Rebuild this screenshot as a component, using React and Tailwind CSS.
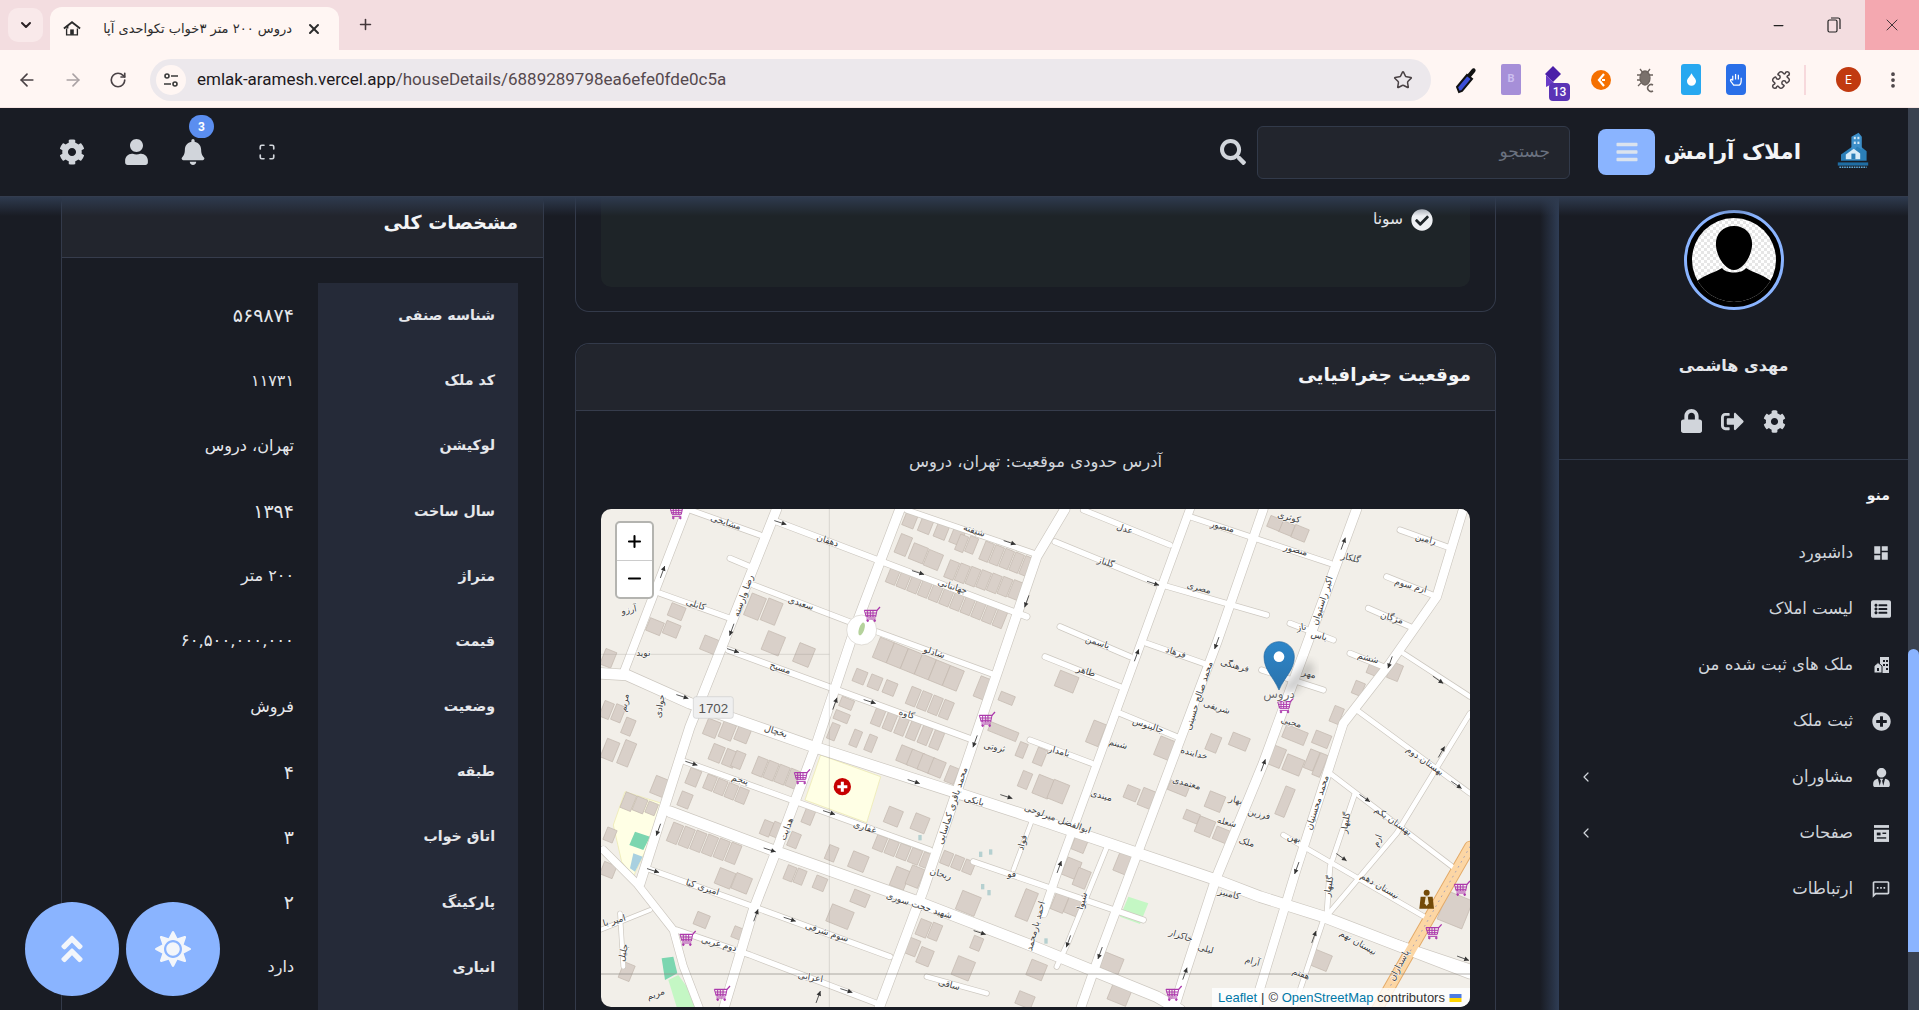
import React from "react";
import { ArrowLeft, ArrowRight, RotateCw, Star, Plus, X, Minus, ChevronDown, ChevronLeft, MoreVertical, Puzzle, Maximize } from "lucide-react";
import { FaCog, FaUser, FaBell, FaSearch, FaBars, FaLock, FaSignOutAlt, FaListAlt, FaPlusCircle, FaUserTie, FaSun, FaAngleDoubleUp, FaCheckCircle } from "react-icons/fa";
import { MdDashboard, MdOutlineSms } from "react-icons/md";

const rows = [
  ["شناسه صنفی", "۵۶۹۸۷۴", "text-[19px]"], ["کد ملک", "۱۱۷۳۱", "text-[16px]"], ["لوکیشن", "تهران، دروس", "text-[16px]"], ["سال ساخت", "۱۳۹۴", "text-[19px]"],
  ["متراژ", "۲۰۰ متر", "text-[16px]"], ["قیمت", "۶۰,۵۰۰,۰۰۰,۰۰۰", "text-[16.5px]"], ["وضعیت", "فروش", "text-[16px]"], ["طبقه", "۴", "text-[19px]"],
  ["اتاق خواب", "۳", "text-[19px]"], ["پارکینگ", "۲", "text-[19px]"], ["انباری", "دارد", "text-[16px]"],
];

const roads = [
  [[[290,27],[100,520]],24],[[[560,27],[300,680],[150,1150]],28],
  [[[930,27],[800,370],[680,730],[560,1050],[490,1230],[400,1530]],28],
  [[[1425,27],[1340,170],[1180,640],[1000,1170],[865,1530]],28],
  [[[1800,27],[1640,465],[1408,1100],[1360,1240]],24],[[[1555,1030],[1435,1325],[1400,1400]],14],
  [[[2020,27],[1880,430],[1650,1040],[1530,1360],[1470,1530]],26],
  [[[2300,27],[2020,790],[1880,1130],[1785,1420],[1750,1530]],28],
  [[[2620,27],[2540,290],[2400,490],[2260,670],[2120,1105],[1990,1530]],26],
  [[[2640,640],[2420,1000],[2200,1260],[2110,1530]],14],[[[2295,880],[2220,1100],[2210,1250]],14],
  [[[300,30],[510,105]],16],[[[560,65],[1310,350]],18],[[[950,30],[1345,165]],16],[[[490,255],[790,370]],16],
  [[[420,175],[480,200]],16],[[[860,395],[1215,525]],16],[[[210,280],[420,355]],16],[[[415,450],[1150,720]],18],
  [[[30,520],[110,525],[300,610],[670,740],[1090,875],[1320,950],[1880,1140],[2010,1190],[2200,1250],[2640,1420]],32],
  [[[285,785],[1020,1050]],16],[[[1150,1085],[1660,1260]],16],[[[240,935],[560,1055],[970,1200],[1320,1335],[1700,1490],[1770,1530]],32],
  [[[170,1105],[490,1220],[900,1370]],16],[[[260,1290],[480,1365],[860,1510]],16],
  [[[40,1050],[140,1150],[250,1290],[280,1400],[330,1530]],22],[[[1800,50],[2220,190]],16],
  [[[1480,30],[1740,135]],16],[[[1395,125],[1700,250],[2030,345]],16],[[[1410,380],[1620,470]],16],
  [[[1670,430],[1840,490]],16],[[[1365,470],[1590,560]],16],[[[1590,640],[1760,710]],16],[[[1320,720],[1505,790]],16],
  [[[2430,90],[2570,140]],16],[[[2390,230],[2540,290]],16],[[[2335,325],[2460,380]],16],[[[2280,460],[2380,500]],16],
  [[[2440,460],[2640,590]],14],[[[2300,630],[2640,880]],14],[[[2220,820],[2600,1110]],14],[[[2080,1005],[2520,1260]],14],
  [[[2010,1190],[2640,1400]],14],
  [[[1330,950],[1270,1110]],12],[[[90,1240],[100,1400]],12],[[[30,1290],[180,1230]],12],[[[2100,370],[2230,420]],16],
  [[[2015,510],[2200,570]],16],[[[1010,1430],[1190,1480]],14],
];

const cl = (x,y,n,dx,dy,w,h) => Array.from({length:n},(_,i)=>[x+i*dx,y+i*dy,w,h]);
const buildings = [
  ...cl(960,60,4,47,17,36,44),...cl(985,160,2,45,20,46,50),[940,135,36,60],...cl(1115,130,2,30,5,26,50),
  ...cl(1190,155,5,30,11,28,58),...cl(1085,210,7,32,10,30,55),...cl(910,225,11,32,13,30,55),...cl(495,320,2,50,15,46,70),
  [260,335,45,40],...cl(195,380,2,50,8,45,40),[360,435,50,45],[550,430,55,60],[642,465,50,60],[55,475,35,50],
  ...cl(880,450,6,42,17,45,65),...cl(810,530,3,45,17,36,40),[1180,565,40,65],[1250,595,45,28],...cl(970,590,4,33,13,30,55),
  [770,610,40,30],[755,650,45,28],[730,695,25,50],...cl(865,650,6,35,14,30,55),[797,715,25,50],[842,730,25,50],
  ...cl(945,765,4,32,13,40,50),[1085,825,30,50],[1305,840,30,50],[1295,750,25,45],[1240,695,90,28],...cl(365,685,3,47,8,40,50),
  [380,760,36,50],[420,775,36,50],[445,780,30,50],...cl(510,800,4,33,12,32,55),[310,832,35,50],...cl(360,848,4,32,13,30,45),
  [285,900,35,45],[210,860,45,55],[910,950,45,50],[990,970,45,50],[530,985,30,45],[560,990,30,45],[612,1020,30,45],[655,950,30,45],
  ...cl(255,1000,6,35,12,32,60),[725,1060,30,45],[805,1085,50,50],...cl(870,1030,5,35,13,32,45),...cl(1070,1075,3,33,13,30,40),
  [930,1135,45,60],[975,1130,40,60],[1135,1210,60,60],...cl(600,1120,2,30,10,28,45),[690,1150,35,40],[810,1195,50,40],[1310,1215,40,90],
  [405,1135,50,50],[455,1150,50,50],[335,1260,40,40],[445,1300,35,35],[750,1250,70,55],[1000,1285,34,50],[1035,1295,30,50],
  [965,1340,40,50],[1005,1370,40,50],[1120,1405,55,60],[1160,1330,30,40],[110,1415,35,50],[60,1005,30,40],
  [50,630,30,50],[85,640,30,50],[115,680,30,50],[60,750,40,60],[110,760,35,75],[55,1110,40,40],[1305,1500,50,40],
  [115,905,34,50],[150,915,34,44],[185,925,30,36],
  ...[[110,545,60,50],[198,700,40,70],[30,770,30,50],[40,860,50,60],[85,875,50,60],[305,880,40,40],[350,895,40,55],[445,865,60,30],[405,745,50,60],[550,730,35,50],[628,725,55,40],[1095,515,35,50],[1030,510,35,30],[985,565,30,40],[920,645,30,50],[795,705,70,40],[875,718,50,40],[740,770,40,60],[790,795,55,50],[845,780,30,60],[870,795,25,70],[765,905,30,90],[555,905,50,50],[485,950,45,30],[525,980,50,50],[575,1005,45,40],[150,1030,40,50],[125,1105,45,55],[155,1135,40,55],[280,1085,40,70],[90,1205,40,60],[130,1215,40,60],[245,1390,60,50],[870,1380,60,50],[20,1410,50,50],[270,1480,60,60],[1275,1230,80,90],[810,100,44,40],[770,85,40,35],[735,70,40,35]].map(([x,y,w,h])=>[x+1320,y,w,h]),
];

const labels = [
  ["مشایخی",405,75,18],["دهقان",710,130,18],["شیفته",1150,100,18],["جهانبانی",1085,268,18],["سعیدی",630,318,18],["کابلی",315,322,18],["آرزو",118,338,-10],["نوید",160,467,0],["مسیح",568,512,18],["شادلو",1030,465,18],["کاوه",948,650,18],["ثروتی",1212,750,10],["بخچال",555,702,18],["پنجم",448,847,15],["هدایت",598,990,-70],["غفاری",822,990,18],["بانکی",1150,910,15],["ریحان",1050,1130,15],["فو",1265,1130,0],["فواد",1305,1030,-75],["امیری کیا",335,1170,18],["شهید حجت سوری",985,1225,18],["سوم شرقی",708,1305,18],["دوم غربی",385,1340,15],["اعرابی",660,1440,10],["ساقی",1075,1462,15],["رضا وارسته",468,290,-70],["محمد باقری کماسایی",1095,920,-72],["جوادی",218,620,-80],["مریم",112,610,-80],["امیر با",75,1270,-15],["جلیل",108,1360,-75],["مریم",200,1490,-20],
  ...[["عدل",282,95,18],["منصور",575,88,15],["کوثری",775,60,15],["منصور",795,158,15],["گلکار",960,182,15],["رامین",1185,125,15],["گلناز",225,195,18],["مصری",505,272,15],["ارم سوم",1140,265,15],["اکبر راستیوان",885,305,-72],["یاس",865,415,15],["ناز",815,390,-5],["مژگان",1083,362,15],["یاسمن",200,435,18],["فرهاد",435,465,18],["فرهنگی",612,505,15],["محمد صالح حسینی",515,590,-72],["مهر",835,530,15],["ششم",1012,482,15],["طاهر",165,522,18],["شریفی",558,630,18],["جالینوس",352,685,18],["محبی",782,675,15],["شبنم",262,740,15],["نامدار",85,762,15],["خداینده",490,768,15],["معتمدی",468,858,15],["میندی",212,895,15],["بهار",615,908,15],["فرزین",685,950,15],["بهستان دوم",1180,790,35],["شعله",588,975,15],["ابوالفضل میرلوحی",80,965,20],["ملک",648,1035,15],["بهن",790,1022,15],["محمد محسنیان",870,910,-72],["کامبیز",595,1190,15],["نیستان دهم",1045,1165,30],["بهستان یکم",1085,970,35],["گلبهار",955,970,-80],["گلبهار",905,1160,-80],["ارم",1050,1025,-70],["نیستان نهم",980,1335,30],["خاکزار",450,1315,18],["لیلی",525,1355,15],["آرام",665,1392,15],["پاسداران",1115,1400,-62],["هفتم",810,1430,20],["شیوا",165,1205,-75],["احمد بارمحمد",25,1280,-75]].map(([t,x,y,r])=>[t,x+1320,y,r]),
];

const arrows = [[218,215,-70],[572,68,18],[425,390,110],[985,218,18],[1310,305,110],[430,452,18],[735,610,-70],[840,605,18],[278,590,18],[1155,725,110],[305,790,18],[972,845,18],[1250,890,18],[718,938,18],[205,990,110],[540,1050,18],[190,1112,18],[498,1245,-70],[600,1258,18],[1170,1298,18],[770,1472,18],[685,1490,-70],[1260,128,18],
  ...[[940,130,-70],[370,250,18],[320,465,-70],[560,430,110],[1080,488,110],[1225,540,35],[1235,755,-60],[1280,855,35],[700,795,-70],[1005,895,35],[88,1100,-70],[800,1105,110],[935,1072,35],[852,1310,-70],[115,1325,110],[210,1360,110],[465,1420,-70],[1300,1375,20]].map(([x,y,a])=>[x+1320,y,a]),
];

const carts = [[262,35],[845,343],[1190,658],[635,830],[292,1315],[395,1480],[2085,617],[2615,1165],[2530,1295],[1750,1480]];

function Cart({x,y}){
  return <g transform={`translate(${x} ${y})`} fill="none" stroke="#ac39ac" strokeWidth="3">
    <path d="M-22 -12H16L25 -22" strokeWidth="4"/><path d="M-22 -12L-16 8H12L16 -12"/><path d="M-12 -12V8M-4 -12V8M4 -12V8M-20 -4H14M-18 3H13"/><path d="M-16 14H12" strokeWidth="3"/>
    <circle cx="-12" cy="19" r="2.5" fill="#ac39ac"/><circle cx="9" cy="19" r="2.5" fill="#ac39ac"/>
  </g>;
}

function MapDrawing(){
  return (
    <svg viewBox="33 27 2607 1494" className="block w-full h-full" preserveAspectRatio="none">
      <defs>
        <linearGradient id="pin" x1="0" y1="0" x2="0" y2="1"><stop offset="0" stopColor="#2e86c8"/><stop offset="1" stopColor="#2a73ad"/></linearGradient>
        <filter id="blur"><feGaussianBlur stdDeviation="12"/></filter>
      </defs>
      <rect x="33" y="27" width="2607" height="1494" fill="#f2efe9"/>
      <polygon points="70,975 105,875 215,910 190,1000 130,1130 95,1085" fill="#ffffe5" stroke="#ece9a8" strokeWidth="2"/>
      <polygon points="135,995 180,1010 160,1050 118,1035" fill="#7bd6b0"/>
      <polygon points="130,1060 158,1070 135,1115 120,1105" fill="#a8d0e0"/>
      <polygon points="235,1440 265,1425 335,1521 260,1521" fill="#c4f7c4"/>
      <polygon points="215,1375 250,1370 262,1420 225,1440" fill="#7bd6b0"/>
      <polygon points="1615,1190 1675,1210 1650,1272 1590,1250" fill="#c4f7c4"/>
      <polygon points="692,765 872,830 830,968 645,900" fill="#ffffe5" stroke="#ece9a8" strokeWidth="2"/>
      {buildings.map(([x,y,w,h],i)=>(
        <rect key={i} x={x-w/2} y={y-h/2} width={w} height={h} transform={`rotate(22 ${x} ${y})`} fill="#d9d0c9" stroke="#c4b9b0" strokeWidth="2"/>
      ))}
      <g fill="none" strokeLinecap="round" strokeLinejoin="round">
        {roads.map(([p,w],i)=><polyline key={i} points={p.map(q=>q.join(",")).join(" ")} stroke="#cdc8c0" strokeWidth={w+4}/>)}
        <polyline points="2640,1040 2360,1530" stroke="#e3ab6a" strokeWidth="36"/>
        {roads.map(([p,w],i)=><polyline key={i} points={p.map(q=>q.join(",")).join(" ")} stroke="#ffffff" strokeWidth={w}/>)}
        <polyline points="2640,1040 2360,1530" stroke="#fcd6a4" strokeWidth="30"/>
        <polyline points="2640,1040 2360,1530" stroke="#a9a3b4" strokeWidth="3" strokeDasharray="3 14"/>
      </g>
      <circle cx="815" cy="390" r="45" fill="#fff" stroke="#d5d0c8" strokeWidth="2"/>
      <ellipse cx="815" cy="387" rx="8" ry="20" transform="rotate(18 815 387)" fill="#b5d29c"/>
      {[[990,1013],[1172,1063],[1202,1056],[1178,1160],[1197,1178],[1368,1323]].map(([x,y],i)=><rect key={i} x={x-5} y={y-8} width="10" height="16" fill="#b5d0d0"/>)}
      <path d="M33 463H718M718 27V1521" stroke="#88857f" strokeWidth="1.2" opacity=".6" fill="none"/>
      <path d="M33 1422H2640" stroke="#88857f" strokeWidth="2" fill="none"/>
      {arrows.map(([x,y,a],i)=>(
        <g key={i} transform={`translate(${x} ${y}) rotate(${a})`}><path d="M-20 0H18" stroke="#4a4a4a" strokeWidth="2.5"/><path d="M18 0L4 -7V7Z" fill="#333"/></g>
      ))}
      <g fontFamily="DejaVu Sans" fontSize="27" fill="#3d3d3d" textAnchor="middle" stroke="#ffffff" strokeWidth="3" paintOrder="stroke">
        {labels.map(([t,x,y,r],i)=><text key={i} x={x} y={y} transform={`rotate(${r} ${x} ${y})`} direction="rtl">{t}</text>)}
      </g>
      <rect x="310" y="590" width="120" height="65" rx="8" fill="#efefef" stroke="#cfcfcf" strokeWidth="2"/>
      <text x="370" y="640" textAnchor="middle" fontFamily="Liberation Sans" fontSize="40" fill="#555">1702</text>
      <circle cx="757" cy="860" r="26" fill="#c60000"/><path d="M757 845V875M742 860H772" stroke="#fff" strokeWidth="9"/>
      {carts.map(([x,y],i)=><Cart key={i} x={x} y={y}/>)}
      <g transform="translate(2510 1210)" fill="#734a08"><circle cx="0" cy="-32" r="9"/><path d="M-18 -20H18L22 16H-22Z"/><path d="M-3 -20H3L6 0L0 8L-6 0Z" fill="#f0e4c8"/></g>
      <path d="M2070 568L2155 480L2175 510L2110 580Z" fill="#555" opacity=".3" filter="url(#blur)"/>
      <text x="2067" y="594" textAnchor="middle" fontFamily="DejaVu Sans" fontSize="36" fill="#6e6e6e" stroke="#fff" strokeWidth="3" paintOrder="stroke" direction="rtl">دروس</text>
      <path d="M2067 570C2050 530 2022 510 2022 470C2022 445 2042 425 2067 425C2092 425 2113 445 2113 470C2113 510 2084 530 2067 570Z" fill="url(#pin)" stroke="#2468a0" strokeWidth="2"/>
      <circle cx="2067" cy="470" r="16" fill="#fff"/>
    </svg>
  );
}

function HouseLogo({ className }){
  return (
    <svg viewBox="0 0 38 50" className={className}>
      <path d="M4 28L24 14L36 24V36H4Z" fill="#2b7fb8"/><path d="M17 30V6L26 1L30 6V22L24 18Z" fill="#3d8fc9"/>
      <rect x="20" y="6" width="2.5" height="3" fill="#cfe6f5"/><rect x="24.5" y="6" width="2.5" height="3" fill="#cfe6f5"/><rect x="20" y="12" width="2.5" height="3" fill="#cfe6f5"/><rect x="24.5" y="12" width="2.5" height="3" fill="#cfe6f5"/>
      <path d="M10 28L20 21L28 27V34H10Z" fill="#d8ecf8"/><rect x="17" y="27" width="5" height="7" fill="#2b7fb8"/>
      <path d="M0 38H38V42H0Z" fill="#1f6da3"/><path d="M2 44H36" stroke="#5fa8d6" strokeWidth="2" strokeDasharray="2 1"/>
    </svg>
  );
}

function Avatar(){
  return (
    <div className="w-[100px] h-[100px] rounded-full border-[3px] border-[#8ab4ff] bg-black p-[5px]">
      <svg viewBox="0 0 84 84" className="block w-full h-full rounded-full">
        <defs><pattern id="chk" width="6" height="6" patternUnits="userSpaceOnUse"><rect width="6" height="6" fill="#fff"/><rect width="3" height="3" fill="#e6e6e6"/><rect x="3" y="3" width="3" height="3" fill="#e6e6e6"/></pattern></defs>
        <rect width="84" height="84" fill="url(#chk)"/>
        <path d="M5 63C14 56 22 55 30 50C34 56 50 56 54 50C62 55 70 56 79 63V84H5Z" fill="#000"/>
        <path d="M42 8C54 8 61 17 60 28C59 40 50 52 42 52C34 52 25 40 24 28C23 17 30 8 42 8Z" fill="#000"/>
      </svg>
    </div>
  );
}

function PagesIcon(){
  return <svg viewBox="0 0 16 18" className="w-[15px] h-[17px]"><path d="M0 0H16V3H0Z" fill="#d1d5db"/><path d="M0 5H16V18H0Z" fill="#d1d5db"/><rect x="3" y="8" width="4" height="3" fill="#191c24"/><rect x="9" y="8" width="4" height="1.5" fill="#191c24"/><rect x="3" y="13" width="10" height="1.5" fill="#191c24"/></svg>;
}

function MyHouseIcon(){
  return <svg viewBox="0 0 15 16" className="w-[15px] h-[16px]" fill="#d1d5db"><path d="M6 0H15V16H6Z"/><path d="M0 9L4 5.5L8 9V16H0Z" stroke="#191c24" strokeWidth="1"/><rect x="9" y="3" width="2" height="2" fill="#191c24"/><rect x="12" y="3" width="2" height="2" fill="#191c24"/><rect x="9" y="7" width="2" height="2" fill="#191c24"/><rect x="12" y="7" width="2" height="2" fill="#191c24"/><rect x="12" y="11" width="2" height="2" fill="#191c24"/><rect x="3" y="11" width="2" height="3" fill="#191c24"/></svg>;
}

const menu = [
  ["داشبورد", <MdDashboard className="w-[18px] h-[18px]" />],
  ["لیست املاک", <FaListAlt className="w-[20px] h-[20px]" />],
  ["ملک های ثبت شده من", <MyHouseIcon />],
  ["ثبت ملک", <FaPlusCircle className="w-[19px] h-[19px]" />],
  ["مشاوران", <FaUserTie className="w-[17px] h-[19px]" />, true],
  ["صفحات", <PagesIcon />, true],
  ["ارتباطات", <MdOutlineSms className="w-[21px] h-[21px]" />],
];

function Ext({ children, className = "" }){
  return <div className={`w-[22px] h-[32px] flex items-center justify-center shrink-0 relative ${className}`}>{children}</div>;
}

function Chrome(){
  return (
    <div className="h-[108px] shrink-0 flex flex-col bg-[#fff6f3] border-b border-[#f6e5e3]">
      <div className="h-[50px] bg-[#f3dde0] flex items-end relative">
        <div className="w-[35px] h-[34px] ml-[8px] mb-[8px] rounded-[10px] bg-[#f9e9ea] flex items-center justify-center"><ChevronDown className="w-[16px] h-[16px] text-[#2b2024]" strokeWidth={3} /></div>
        <div className="w-[289px] h-[43px] ml-[7px] rounded-t-[12px] bg-[#fff6f3] flex items-center px-[12px]">
          <svg viewBox="0 0 20 16" className="w-[18px] h-[15px] shrink-0 ml-[1px]"><path d="M1 8L10 1L19 8" fill="none" stroke="#2a2a2a" strokeWidth="2"/><path d="M4 8V15H16V8" fill="none" stroke="#2a2a2a" strokeWidth="1.5"/><rect x="8" y="9" width="4" height="6" fill="#2a2a2a"/><rect x="4" y="5" width="2" height="3" fill="#2a2a2a"/></svg>
          <div className="w-[205px] ml-[6px] whitespace-nowrap text-[13px] text-[#2b2b2b] relative text-right" dir="rtl">
            دروس ۲۰۰ متر ۳خواب تکواحدی آپا
            <div className="absolute left-0 top-0 bottom-0 w-[16px] bg-gradient-to-r from-[#fff6f3] to-transparent" />
          </div>
          <X className="w-[16px] h-[16px] ml-[14px] text-[#2b2b2b]" strokeWidth={3} />
        </div>
        <Plus className="w-[17px] h-[17px] ml-[18px] mb-[17px] text-[#43373a]" strokeWidth={2.2} />
        <div className="ml-auto flex items-stretch h-[50px]">
          <div className="w-[56px] flex items-center justify-center"><Minus className="w-[15px] h-[15px] text-[#222]" /></div>
          <div className="w-[56px] mr-[3px] flex items-center justify-center">
            <svg viewBox="0 0 14 16" className="w-[14px] h-[16px]" fill="none" stroke="#222" strokeWidth="1.2"><rect x="1" y="3" width="9" height="12" rx="1.5"/><path d="M4 1H11C12 1 13 2 13 3V12"/></svg>
          </div>
          <div className="w-[54px] bg-[#f4a8b0] flex items-center justify-center"><X className="w-[20px] h-[20px] text-[#43373a]" strokeWidth={1.2} /></div>
        </div>
      </div>
      <div className="flex-1 flex items-center pt-[2px]">
        <ArrowLeft className="w-[20px] h-[20px] ml-[17px] text-[#4a4245]" strokeWidth={2} />
        <ArrowRight className="w-[20px] h-[20px] ml-[26px] text-[#aaa2a4]" strokeWidth={2} />
        <RotateCw className="w-[18px] h-[18px] ml-[26px] text-[#4a4245]" strokeWidth={2.2} />
        <div className="w-[1281px] h-[42px] ml-[23px] rounded-full bg-[#ece8ec] flex items-center">
          <div className="w-[30px] h-[30px] ml-[6px] rounded-full bg-[#fff6f3] flex items-center justify-center">
            <svg viewBox="0 0 16 16" className="w-[16px] h-[16px]" fill="none" stroke="#3a3a3a" strokeWidth="1.6"><circle cx="4" cy="4" r="2"/><path d="M8 4H15M1 12H8"/><circle cx="12" cy="12" r="2"/></svg>
          </div>
          <span className="ml-[11px] text-[17px] font-['Roboto'] text-[#20181c] whitespace-nowrap">emlak-aramesh.vercel.app<span className="text-[#55494e]">/houseDetails/6889289798ea6efe0fde0c5a</span></span>
          <Star className="w-[20px] h-[20px] ml-auto mr-[18px] text-[#4a4245]" strokeWidth={1.8} />
        </div>
        <div className="flex items-center ml-[24px] gap-[23px]">
          <Ext><svg viewBox="0 0 22 28" className="w-[22px] h-[28px]"><path d="M4 26L2 21L12 9L17 13L7 25Z" fill="#3b4fd8" stroke="#111" strokeWidth="2"/><path d="M12 9L17 3C19 1 22 4 20 6L15 12Z" fill="#111"/></svg></Ext>
          <Ext><div className="w-[20px] h-[31px] rounded-[2px] bg-[#a68fd8] text-[#cdbff0] text-[11px] font-bold flex items-center justify-center font-['Roboto']">B</div></Ext>
          <Ext><svg viewBox="0 0 20 24" className="w-[20px] h-[24px] -translate-x-[3px] -translate-y-[3px]"><path d="M10 1L18 9L10 17L2 9Z" fill="#4a1ea8"/><path d="M3 10L11 18L3 22Z" fill="#6a3cc8"/></svg>
            <span className="absolute -right-[3px] bottom-[-5px] w-[21px] h-[18px] rounded-[4px] bg-[#5b34b5] text-white text-[12px] font-['Roboto'] font-medium flex items-center justify-center">13</span></Ext>
          <Ext><svg viewBox="0 0 20 22" className="w-[20px] h-[22px]"><circle cx="10" cy="11" r="10" fill="#f57000"/><path d="M13 5L8 11L13 17" fill="none" stroke="#fff" strokeWidth="2.2"/><path d="M14 11H11" stroke="#fff" strokeWidth="2"/></svg></Ext>
          <Ext><svg viewBox="0 0 20 26" className="w-[20px] h-[26px]" fill="none" stroke="#6d645f" strokeWidth="1.3"><ellipse cx="9" cy="11" rx="5" ry="7" fill="#7a716c"/><path d="M4 2L7 6M14 2L11 6M1 8H5M1 13H5M17 8H13M2 19L5 16"/><path d="M17 18A3.5 3.5 0 1 0 17 24" strokeWidth="1.6"/></svg></Ext>
          <Ext><div className="w-[20px] h-[31px] rounded-[3px] bg-[#28a8f0] flex items-center justify-center"><svg viewBox="0 0 10 14" className="w-[9px] h-[13px]"><path d="M5 0C7 4 10 6 10 9A5 5 0 0 1 0 9C0 6 3 4 5 0Z" fill="#fff"/></svg></div></Ext>
          <Ext><div className="w-[20px] h-[31px] rounded-[4px] bg-[#2a6fe8] flex items-center justify-center"><svg viewBox="0 0 16 16" className="w-[15px] h-[15px]" fill="none" stroke="#fff" strokeWidth="1.3"><path d="M4 9V4M7 8V2M10 8V3M13 9V6M4 9L3 8C2 7 1 9 2 10L5 14H11C13 13 13 11 13 9"/></svg></div></Ext>
          <Ext><Puzzle className="w-[20px] h-[20px] text-[#4a4245]" strokeWidth={1.8} /></Ext>
        </div>
        <div className="w-[2px] h-[30px] ml-[12px] bg-[#f7d9dc]" />
        <div className="w-[25px] h-[25px] ml-[30px] rounded-full bg-[#c13a10] text-white text-[12px] font-['Roboto'] flex items-center justify-center">E</div>
        <MoreVertical className="w-[20px] h-[20px] ml-[22px] text-[#4a4245]" strokeWidth={2.5} />
      </div>
    </div>
  );
}

function Header(){
  return (
    <header className="h-[88px] shrink-0 bg-[#191c24] flex items-center justify-between">
      <div className="flex items-center text-[#d1d5db]">
        <FaCog className="w-[26px] h-[26px] ml-[59px]" />
        <FaUser className="w-[23px] h-[26px] ml-[40px]" />
        <div className="relative ml-[33px] w-[24px] h-[26px]">
          <FaBell className="w-[24px] h-[26px]" />
          <span className="absolute -top-[24px] left-[8px] w-[25px] h-[23px] rounded-full bg-[#5b8ef0] text-white text-[12px] font-['Roboto'] font-bold flex items-center justify-center">3</span>
        </div>
        <Maximize className="w-[18px] h-[18px] ml-[53px]" strokeWidth={2.2} />
      </div>
      <div className="flex items-center mr-[36px]">
        <FaSearch className="w-[26px] h-[26px] text-[#d1d5db]" />
        <div dir="rtl" className="w-[313px] h-[53px] ml-[11px] rounded-[6px] bg-[#22252d] border border-[#323a4a] flex items-center pr-[19px] text-[17px] text-[#6b7280]">جستجو</div>
        <div className="w-[57px] h-[46px] ml-[28px] rounded-[8px] bg-[#8ab4ff] flex items-center justify-center"><FaBars className="w-[24px] h-[24px] text-[#dbe3ee]" /></div>
        <div dir="rtl" className="ml-[10px] w-[136px] text-center whitespace-nowrap text-[21.5px] font-bold text-[#f3f4f6]">املاک آرامش</div>
        <HouseLogo className="w-[38px] h-[40px] ml-[33px]" />
      </div>
    </header>
  );
}

function Sidebar(){
  return (
    <aside dir="rtl" className="w-[349px] shrink-0 bg-[#191c24] flex flex-col items-stretch text-[#d1d5db]">
      <div className="flex justify-center pt-[14px]"><Avatar /></div>
      <div className="mt-[42px] h-[28px] flex items-center justify-center text-[16px] font-bold text-[#e5e7eb]">مهدی هاشمی</div>
      <div dir="ltr" className="mt-[29px] h-[24px] flex items-center justify-center">
        <FaLock className="w-[21px] h-[24px] text-[#d1d5db]" />
        <FaSignOutAlt className="w-[23px] h-[23px] ml-[19px] text-[#d1d5db]" />
        <FaCog className="w-[23px] h-[23px] ml-[19px] text-[#d1d5db]" />
      </div>
      <div className="mt-[26px] border-t border-[#2f3747]" />
      <div className="mt-[23px] h-[24px] pr-[18px] flex items-center text-[14px] font-bold text-[#f3f4f6]">منو</div>
      <div className="mt-[18px] flex flex-col">
        {menu.map(([t, icon, chev]) => (
          <div key={t} className="h-[56px] flex items-center pr-[17px] text-[16.5px]">
            <span className="w-[20px] flex items-center justify-center">{icon}</span>
            <span className="mr-[18px] whitespace-nowrap">{t}</span>
            {chev && <ChevronLeft className="w-[16px] h-[16px] mr-auto ml-[19px]" strokeWidth={1.8} />}
          </div>
        ))}
      </div>
    </aside>
  );
}

export default function App(){
  return (
    <div className="h-screen w-full overflow-hidden flex flex-col bg-[#191c24] font-['DejaVu_Sans',sans-serif]">
      <Chrome />
      <div className="flex-1 min-h-0 flex relative">
        <div className="flex-1 min-w-0 flex flex-col">
          <Header />
          <div className="flex-1 min-h-0 flex overflow-hidden relative">
            <div className="absolute top-0 inset-x-0 h-[20px] border-t border-[#333c4e] bg-gradient-to-b from-[#2e3a4e] to-transparent z-10" />
            <div className="w-[483px] ml-[61px] shrink-0" dir="rtl">
              <div className="rounded-t-[8px] border border-[#333a4a]">
                <div className="h-[61px] pb-[10px] bg-[#22252d] border-b border-[#363c4c] flex items-center pr-[25px] text-[19px] font-bold text-[#f3f4f6]">مشخصات کلی</div>
                <div className="pt-[25px] pr-[25px]">
                  {rows.map(([k, v, size]) => (
                    <div key={k} className="flex h-[65.2px]">
                      <div className="w-[200px] bg-[#252a38] flex items-center pr-[23px] text-[14.2px] font-bold text-[#e5e7eb]">{k}</div>
                      <div className={`flex items-center pr-[24px] text-[#e5e7eb] ${size}`}>{v}</div>
                    </div>
                  ))}
                  <div className="w-[200px] h-[65.2px] bg-[#252a38]" />
                </div>
              </div>
            </div>
            <div className="w-[921px] ml-[31px] shrink-0 flex flex-col" dir="rtl">
              <div className="h-[116px] shrink-0 rounded-b-[14px] border-x border-b border-[#333a4a] px-[25px]">
                <div className="h-[91px] rounded-b-[10px] bg-[#1e2428] pt-[12px] pr-[37px] flex items-start">
                  <div className="flex items-center gap-[8px] text-[#e5e7eb] text-[15.5px]">
                    <FaCheckCircle className="w-[22px] h-[22px] text-[#eef0f3]" />
                    <span>سونا</span>
                  </div>
                </div>
              </div>
              <div className="mt-[31px] flex-1 rounded-t-[14px] border-x border-t border-[#333a4a]">
                <div className="h-[67px] pb-[4px] rounded-t-[14px] bg-[#22252d] border-b border-[#363c4c] flex items-center pr-[24px] text-[18.5px] font-bold text-[#f3f4f6]">موقعیت جغرافیایی</div>
                <div className="h-[98px] flex items-center justify-center pt-[5px] text-[16.4px] text-[#d1d5db]">آدرس حدودی موقعیت: تهران، دروس</div>
                <div dir="ltr" className="relative mx-[25px] h-[498px] rounded-[10px] overflow-hidden">
                  <MapDrawing />
                  <div className="absolute left-[14px] top-[12px] w-[39px] h-[78px] rounded-[5px] border-2 border-[#b4b4b0] bg-white flex flex-col">
                    <div className="flex-1 flex items-center justify-center border-b border-[#ccc]"><Plus className="w-[19px] h-[19px] text-black" strokeWidth={2.6} /></div>
                    <div className="flex-1 flex items-center justify-center"><Minus className="w-[19px] h-[19px] text-black" strokeWidth={2.6} /></div>
                  </div>
                  <div className="absolute right-0 bottom-0 h-[19px] w-[258px] bg-white/80 flex items-center pl-[6px] text-[13px] font-['Liberation_Sans'] text-[#333] whitespace-nowrap">
                    <span className="text-[#0078a8]">Leaflet</span>
                    <span className="mx-[4px]">|</span>
                    <span>©&nbsp;</span>
                    <span className="text-[#0078a8]">OpenStreetMap</span>
                    <span>&nbsp;contributors&nbsp;</span>
                    <svg viewBox="0 0 12 8" className="w-[13px] h-[8px] shrink-0"><rect width="12" height="4" fill="#4C7BE1"/><rect y="4" width="12" height="4" fill="#FFD500"/></svg>
                  </div>
                </div>
              </div>
            </div>
            <div className="ml-auto w-[19px] shrink-0 bg-gradient-to-r from-[#191c24] to-[#2f3d55]" />
            <Sidebar />
            <div className="absolute left-[25px] bottom-[14px] flex gap-[7px] z-20">
              <div className="w-[94px] h-[94px] rounded-full bg-[#8ab4ff] flex items-center justify-center"><FaAngleDoubleUp className="w-[30px] h-[34px] text-[#f3f6fb]" /></div>
              <div className="w-[94px] h-[94px] rounded-full bg-[#8ab4ff] flex items-center justify-center"><FaSun className="w-[36px] h-[36px] text-[#f3f6fb]" /></div>
            </div>
          </div>
        </div>
        <div className="w-[11px] shrink-0 bg-[#3a4250]">
          <div className="mt-[541px] h-[303px] rounded-t-[6px] bg-[#8ab4ff]" />
        </div>
      </div>
    </div>
  );
}
